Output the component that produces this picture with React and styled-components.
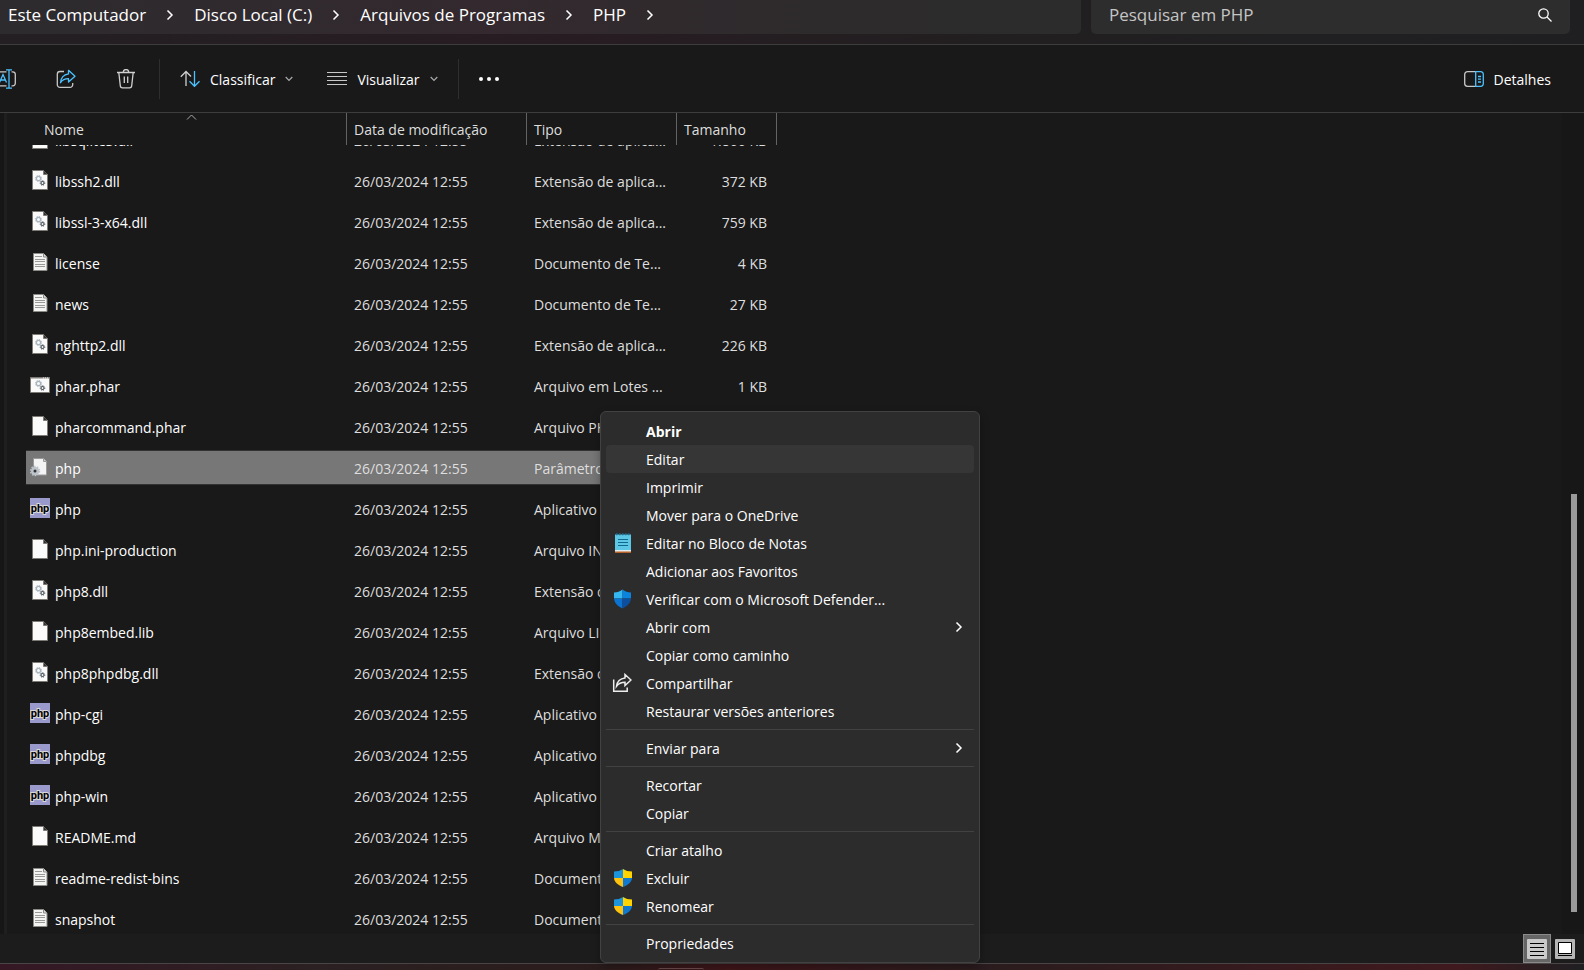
import { useLayoutEffect, useRef } from 'react';
import styled, { createGlobalStyle } from 'styled-components';

const GlobalStyle = createGlobalStyle`
    * {
        box-sizing: border-box;
    }
    body {
        margin: 0;
        background: #191919;
        color: #fff;
        font-family: 'Open Sans', 'Noto Sans', sans-serif;
        font-size: 14px;
        line-height: 20px;
        overflow: hidden;
    }
    button,
    input {
        font: inherit;
        color: inherit;
        background: none;
        border: none;
        padding: 0;
        margin: 0;
    }
    svg {
        display: block;
        flex: none;
    }
`;

const Window = styled.div`
    height: 100vh;
    display: flex;
    flex-direction: column;
`;

const TopBar = styled.header`
    display: flex;
    gap: 10px;
    padding: 0 14px 10px 0;
    background: linear-gradient(90deg, #231f23, #271c22 35%, #211f20 65%, #1f1f22);
    border-bottom: 1px solid #3d3d3d;
`;

const AddressBar = styled.nav`
    flex: 1;
    display: flex;
    align-items: center;
    height: 34px;
    padding: 0 0 4px 8px;
    border-radius: 0 0 5px 0;
    background: linear-gradient(90deg, #2d2b2e, #33292e 45%, #2d2b2c 80%, #2c2c2c);
    font-size: 17px;
    svg {
        margin: 0 20px;
    }
`;

const Crumb = styled.button`
    white-space: nowrap;
`;

const SearchBox = styled.label`
    display: flex;
    align-items: center;
    width: 479px;
    height: 34px;
    padding: 0 18px 4px 18px;
    border-radius: 0 0 5px 5px;
    background: #2d2d2d;
    font-size: 17px;
    input {
        flex: 1;
        min-width: 0;
        outline: none;
    }
    input::placeholder {
        color: #c5c5c5;
        opacity: 1;
    }
`;

const Toolbar = styled.div`
    display: flex;
    align-items: center;
    height: 68px;
    padding-right: 33px;
    border-bottom: 1px solid #3d3d3d;
`;

const IconButton = styled.button`
    display: flex;
    justify-content: center;
    width: 60px;
    &:first-child {
        margin-left: -24px;
    }
`;

const ToolButton = styled.button`
    display: flex;
    align-items: center;
    gap: 10px;
    margin-left: ${(p) => (p.$end ? 'auto' : '0')};
    padding-right: ${(p) => (p.$end ? '0' : '14px')};
    padding-left: 20px;
`;

const Label = styled.span`
    padding-top: 2px;
`;

const Divider = styled.div`
    width: 1px;
    height: 40px;
    margin-left: ${(p) => p.$gap};
    background: #2e2e2e;
`;

const Content = styled.main`
    flex: 1;
    min-height: 0;
    display: flex;
    position: relative;
`;

const NavEdge = styled.div`
    width: 7px;
    border-right: 3px solid #1f1f1f;
    background: #161616;
`;

const FileTable = styled.table`
    flex: 1;
    min-width: 0;
    min-height: 0;
    display: flex;
    flex-direction: column;
    padding-left: 19px;
    text-align: left;
`;

const HeadRow = styled.tr`
    display: grid;
    grid-template-columns: 321px 180px 150px 100px;
    height: 32px;
`;

const HeadCell = styled.th`
    position: relative;
    padding: 7px 0 0 ${(p) => (p.$first ? '18px' : '7px')};
    border-right: 1px solid #636363;
    color: #dedede;
    font-weight: 400;
`;

const SortMark = styled.svg`
    position: absolute;
    top: 1px;
    left: 160px;
`;

const FileRows = styled.tbody`
    flex: 1;
    min-height: 0;
    display: block;
    padding-top: 3px;
    overflow-y: auto;
    scrollbar-width: none;
`;

const Row = styled.tr`
    display: grid;
    grid-template-columns: 321px 180px 150px 100px;
    width: 751px;
    height: 35px;
    margin-bottom: 6px;
    border: solid ${(p) => (p.$selected ? '#333' : 'transparent')};
    border-width: 1px 0;
    background: ${(p) => (p.$selected ? '#777' : 'transparent')};
    td {
        display: flex;
        align-items: center;
        padding: 3px 0 0 7px;
        color: #dedede;
        white-space: nowrap;
    }
    td:first-child {
        gap: 5px;
        padding-left: 4px;
        color: #fff;
    }
    td:last-child {
        justify-content: flex-end;
        padding-right: 10px;
    }
    svg {
        margin-bottom: 4px;
    }
`;

const ScrollTrack = styled.div`
    width: 22px;
    padding: 381px 7px 22px 9px;
    background: #171717;
`;

const ScrollThumb = styled.div`
    height: 100%;
    background: #9a9a9a;
`;

const StatusBar = styled.footer`
    display: flex;
    justify-content: flex-end;
    gap: 4px;
    height: 29px;
    padding-right: 9px;
    background: #1c1c1c;
`;

const ViewButton = styled.button`
    display: flex;
    align-items: center;
    justify-content: center;
    width: ${(p) => (p.$active ? '28px' : '20px')};
    border: ${(p) => (p.$active ? '1px solid #8a8a8a' : 'none')};
    background: ${(p) => (p.$active ? '#666' : 'transparent')};
`;

const Taskbar = styled.div`
    height: 7px;
    padding: 4px 0 0 658px;
    border-top: 1px solid #4a4446;
    background: linear-gradient(90deg, #351824, #2b2022 20%, #2b1c1c 38%, #40161a 46%, #2a1c1e 62%, #3f191d 92%, #1f1f22);
`;

const TaskItem = styled.div`
    width: 46px;
    height: 2px;
    border-top: 1px solid #6b4b4d;
    border-radius: 4px 4px 0 0;
`;

const Menu = styled.div`
    position: absolute;
    top: 298px;
    left: 600px;
    width: 380px;
    padding: 5px;
    border: 1px solid #424242;
    border-radius: 6px;
    background: #2c2c2c;
    box-shadow: 0 4px 10px rgba(0, 0, 0, 0.3);
`;

const MenuItem = styled.button`
    display: grid;
    grid-template-columns: 24px 1fr 8px;
    align-items: center;
    gap: 10px;
    width: 100%;
    height: 28px;
    padding: 0 11px 0 6px;
    border-radius: 4px;
    background: ${(p) => (p.$hover ? '#363636' : 'transparent')};
    font-weight: ${(p) => (p.$bold ? '700' : '400')};
    text-align: left;
`;

const MenuLine = styled.hr`
    height: 1px;
    margin: 4px 0;
    border: none;
    background: #424242;
`;

const Chevron = () => (
    <svg width="8" height="12" viewBox="0 0 8 12" fill="none" stroke="#fff" strokeWidth="1.5">
        <path d="M1.5 1.5 6 6 1.5 10.5" />
    </svg>
);

const DownArrow = () => (
    <svg width="8" height="6" viewBox="0 0 8 6" fill="none" stroke="#aaa" strokeWidth="1.2">
        <path d="M.7 1 4 4.3 7.3 1" />
    </svg>
);

const SearchIcon = () => (
    <svg width="14" height="14" viewBox="0 0 14 14" fill="none" stroke="#fff" strokeWidth="1.3">
        <circle cx="5.5" cy="5.5" r="4.7" />
        <path d="m9 9 4.5 4.5" />
    </svg>
);

const RenameIcon = () => (
    <svg width="20" height="20" viewBox="0 0 20 20" fill="none" strokeWidth="1.3">
        <path d="M10.5 2.8H3a2.5 2.5 0 0 0-2.5 2.5v9A2.5 2.5 0 0 0 3 16.8h7.5M15.5 2.8h1.2a2.6 2.6 0 0 1 2.6 2.5v9a2.6 2.6 0 0 1-2.6 2.5h-1.2" stroke="#c8c8c8" />
        <path d="M13 .8v18.4M10 .8h6M10 19.2h6M3.5 13.5 7 5.5l3.500 8M4.7 11h4.6" stroke="#4cc2ff" />
    </svg>
);

const ShareIcon = () => (
    <svg width="20" height="20" viewBox="0 0 20 20" fill="none" strokeWidth="1.3" strokeLinejoin="round">
        <path d="M8 2.5H4A2.7 2.7 0 0 0 1.3 5.2v10.5A2.7 2.7 0 0 0 4 18.4h10a2.7 2.7 0 0 0 2.7-2.7V14" stroke="#c8c8c8" />
        <path d="M12.5 1.3 19 7.2l-6.5 5.9V9.7c-3.8 0-6.2 1.2-8 4 .4-4.5 3-8 8-8.8z" stroke="#4cc2ff" />
    </svg>
);

const TrashIcon = () => (
    <svg width="20" height="20" viewBox="0 0 20 20" fill="none" stroke="#d0d0d0" strokeWidth="1.3">
        <path d="M1 3.5h18M7.3 3.3a2.7 2.7 0 0 1 5.4 0M2.8 3.5l1.5 13.3A2.2 2.2 0 0 0 6.5 18.9h7a2.2 2.2 0 0 0 2.2-2.1l1.5-13.3M8.3 7.5v6.5M11.7 7.5v6.5" />
    </svg>
);

const SortIcon = () => (
    <svg width="20" height="20" viewBox="0 0 20 20" fill="none" strokeWidth="1.3">
        <path d="M6 17V2.5M.8 7.700 6 2.5l5 5" stroke="#d0d0d0" />
        <path d="M14.5 2v15M9.5 12.3l5 5 5-5" stroke="#4cc2ff" />
    </svg>
);

const LinesIcon = () => (
    <svg width="20" height="20" viewBox="0 0 20 20" stroke="#c8c8c8">
        <path d="M0 3.5h20M0 7.5h20M0 11.5h20M0 15.5h20" />
    </svg>
);

const DotsIcon = () => (
    <svg width="20" height="4" viewBox="0 0 20 4" fill="#fff">
        <circle cx="2" cy="2" r="2" />
        <circle cx="10" cy="2" r="2" />
        <circle cx="18" cy="2" r="2" />
    </svg>
);

const DetailsIcon = () => (
    <svg width="20" height="16" viewBox="0 0 20 16" fill="none" strokeWidth="1.3">
        <path d="M11.5.7h-8A2.8 2.8 0 0 0 .7 3.5v9a2.8 2.8 0 0 0 2.8 2.8h8" stroke="#c8c8c8" />
        <path d="M11.7.7v14.6h5a2.6 2.6 0 0 0 2.6-2.8v-9A2.6 2.6 0 0 0 16.7.7zM14 5.5h3M14 8.2h3M14 11h3" stroke="#4cc2ff" />
    </svg>
);

const Gears = () => (
    <g fill="none">
        <circle cx="8.5" cy="8.5" r="2.1" stroke="#a9b4bd" strokeWidth="1.2" />
        <circle cx="8.5" cy="8.5" r="3.1" stroke="#a9b4bd" strokeDasharray="1.2 1.23" />
        <circle cx="12.5" cy="13" r="1.500" stroke="#4c565d" strokeWidth="1.1" />
        <circle cx="12.5" cy="13" r="2.3" stroke="#4c565d" strokeDasharray=".9 .9" />
    </g>
);

const Sheet = () => (
    <g stroke="#7d7a76">
        <path d="M2.5.5h11l4 4v15h-15z" fill="#fafafa" />
        <path d="M13.5.5v4h4" fill="#333" />
    </g>
);

const FileIcon = ({ kind }) => (
    <svg width="20" height="20" viewBox="0 0 20 20">
        {(kind === 'dll' || kind === 'blank') && <Sheet />}
        {kind === 'dll' && <Gears />}
        {kind === 'text' && (
            <>
                <path d="M3.5 1.5h10L17 5v13.500H3.500z" fill="#f4f4f2" stroke="#8a8a86" />
                <path d="M13.5 1.5V5H17" fill="#ddd" stroke="#8a8a86" />
                <path d="M5 4.5h7M5 7.5h10M5 9.5h10M5 12.5h10M5 14.5h10" stroke="#999" />
            </>
        )}
        {kind === 'batch' && (
            <>
                <path d="M.5 2.500h19v15H.5z" fill="#fafafa" stroke="#7d7a76" />
                <path d="M1 3h18" stroke="#7d7a76" />
                <path d="M13 3h5" stroke="#eee" strokeDasharray="1 1" />
                <Gears />
            </>
        )}
        {kind === 'config' && (
            <>
                <path d="M3.5 1.5h10l3 3V18h-13z" fill="#f4f4f4" stroke="#9a9a9a" />
                <path d="M13.5 1.5v3h3" fill="#ccc" stroke="#9a9a9a" />
                <circle cx="5" cy="14" r="4" fill="#bcc3ca" />
                <circle cx="5" cy="14" r="4.5" fill="none" stroke="#bcc3ca" strokeDasharray="1.5 1.33" strokeWidth="1.5" />
                <circle cx="5" cy="14" r="1.5" fill="#333" />
            </>
        )}
        {kind === 'php' && (
            <>
                <path d="M0 0h20v20H0z" fill="#9999cc" />
                <text
                    x="10"
                    y="14"
                    textAnchor="middle"
                    fontFamily="Roboto, sans-serif"
                    fontSize="11"
                    fontWeight="700"
                    fill="#000"
                    stroke="#d8d8d8"
                    strokeWidth="2"
                    paintOrder="stroke"
                >
                    php
                </text>
            </>
        )}
    </svg>
);

const NotepadIcon = () => (
    <svg width="20" height="20" viewBox="0 0 20 20">
        <path d="M3 17h16v3H3z" fill="#b5602a" />
        <path d="M3 16h16v2.5H3z" fill="#e8eef0" />
        <path d="M3 1.5h16V17H3z" fill="#5cc8e6" />
        <path d="M4 1.3h14" stroke="#1c6f93" strokeWidth="2" strokeDasharray="1.5 1.5" />
        <path d="M6 6.5h10M6 9.5h10M6 12.5h10" stroke="#0f6a8e" />
    </svg>
);

const DefenderIcon = () => (
    <svg width="20" height="20" viewBox="0 0 20 20">
        <path d="M10.500.5v9H2v-6c3.500 0 6-1 8.500-3z" fill="#35b8f1" />
        <path d="M10.500.5v9H19v-6c-3.500 0-6-1-8.500-3z" fill="#0a84dc" />
        <path d="M10.500 9.500v10C5.500 17 2.300 14 2 9.500z" fill="#0b74d1" />
        <path d="M10.500 9.500v10c5-2.500 8.200-5.500 8.500-10z" fill="#0c4f9e" />
    </svg>
);

const AdminShield = () => (
    <svg width="20" height="20" viewBox="0 0 20 20">
        <path d="M11 1v9H2V3.500C5.500 3.500 8.500 2.700 11 1z" fill="#1c95dd" />
        <path d="M11 1v9h9V3.500C16.500 3.500 13.500 2.700 11 1z" fill="#ffd400" />
        <path d="M11 10v9C5.500 16.800 2.300 14 2 10z" fill="#ffc20e" />
        <path d="M11 10v9c5.500-2.200 8.700-5 9-9z" fill="#0f79cf" />
    </svg>
);

const MenuShareIcon = () => (
    <svg width="20" height="20" viewBox="0 0 20 20" fill="none" stroke="#eee" strokeWidth="1.5">
        <path d="M1.700 6.500v11.800h13.500v-3.800" />
        <path d="M13 1.500 19 7l-6 5.500V9.300c-4 0-6.300 1-8.500 4C5 9 8 5.300 13 4.900z" />
    </svg>
);

const menuIcons = {
    notepad: NotepadIcon,
    defender: DefenderIcon,
    share: MenuShareIcon,
    admin: AdminShield
};

const dll = 'Extensão de aplica...';
const txt = 'Documento de Te...';
const files = [
    { name: 'libsqlite3.dll', kind: 'dll', type: dll, size: '1.866 KB' },
    { name: 'libssh2.dll', kind: 'dll', type: dll, size: '372 KB' },
    { name: 'libssl-3-x64.dll', kind: 'dll', type: dll, size: '759 KB' },
    { name: 'license', kind: 'text', type: txt, size: '4 KB' },
    { name: 'news', kind: 'text', type: txt, size: '27 KB' },
    { name: 'nghttp2.dll', kind: 'dll', type: dll, size: '226 KB' },
    { name: 'phar.phar', kind: 'batch', type: 'Arquivo em Lotes ...', size: '1 KB' },
    { name: 'pharcommand.phar', kind: 'blank', type: 'Arquivo PHAR' },
    { name: 'php', kind: 'config', type: 'Parâmetros de co...', selected: true },
    { name: 'php', kind: 'php', type: 'Aplicativo' },
    { name: 'php.ini-production', kind: 'blank', type: 'Arquivo INI-PRO...' },
    { name: 'php8.dll', kind: 'dll', type: dll },
    { name: 'php8embed.lib', kind: 'blank', type: 'Arquivo LIB' },
    { name: 'php8phpdbg.dll', kind: 'dll', type: dll },
    { name: 'php-cgi', kind: 'php', type: 'Aplicativo' },
    { name: 'phpdbg', kind: 'php', type: 'Aplicativo' },
    { name: 'php-win', kind: 'php', type: 'Aplicativo' },
    { name: 'README.md', kind: 'blank', type: 'Arquivo MD' },
    { name: 'readme-redist-bins', kind: 'text', type: txt },
    { name: 'snapshot', kind: 'text', type: txt }
];

const menuItems = [
    { label: 'Abrir', bold: true },
    { label: 'Editar', hover: true },
    { label: 'Imprimir' },
    { label: 'Mover para o OneDrive' },
    { label: 'Editar no Bloco de Notas', icon: 'notepad' },
    { label: 'Adicionar aos Favoritos' },
    { label: 'Verificar com o Microsoft Defender...', icon: 'defender' },
    { label: 'Abrir com', sub: true },
    { label: 'Copiar como caminho' },
    { label: 'Compartilhar', icon: 'share' },
    { label: 'Restaurar versões anteriores' },
    null,
    { label: 'Enviar para', sub: true },
    null,
    { label: 'Recortar' },
    { label: 'Copiar' },
    null,
    { label: 'Criar atalho' },
    { label: 'Excluir', icon: 'admin' },
    { label: 'Renomear', icon: 'admin' },
    null,
    { label: 'Propriedades' }
];

const crumbs = ['Este Computador', 'Disco Local (C:)', 'Arquivos de Programas', 'PHP'];

function ContextMenu() {
    return (
        <Menu role="menu">
            {menuItems.map((item, i) => {
                if (!item) return <MenuLine key={i} />;
                const Icon = menuIcons[item.icon];
                return (
                    <MenuItem key={i} role="menuitem" $bold={item.bold} $hover={item.hover}>
                        <span>{Icon && <Icon />}</span>
                        <Label>{item.label}</Label>
                        {item.sub && <Chevron />}
                    </MenuItem>
                );
            })}
        </Menu>
    );
}

function FileBrowser() {
    const rowsRef = useRef(null);

    useLayoutEffect(() => {
        rowsRef.current.scrollTop = 26;
    }, []);

    return (
        <FileTable>
            <thead>
                <HeadRow>
                    <HeadCell $first>
                        Nome
                        <SortMark width="11" height="7" viewBox="0 0 11 7" fill="none" stroke="#aaa">
                            <path d="M1 5.5 5.5 1 10 5.5" />
                        </SortMark>
                    </HeadCell>
                    <HeadCell>Data de modificação</HeadCell>
                    <HeadCell>Tipo</HeadCell>
                    <HeadCell>Tamanho</HeadCell>
                </HeadRow>
            </thead>
            <FileRows ref={rowsRef}>
                {files.map((file, i) => (
                    <Row key={i} $selected={file.selected}>
                        <td>
                            <FileIcon kind={file.kind} />
                            {file.name}
                        </td>
                        <td>26/03/2024 12:55</td>
                        <td>{file.type}</td>
                        <td>{file.size}</td>
                    </Row>
                ))}
            </FileRows>
        </FileTable>
    );
}

function App() {
    return (
        <Window>
            <GlobalStyle />
            <TopBar>
                <AddressBar>
                    {crumbs.map((crumb) => [
                        <Crumb key={crumb}>{crumb}</Crumb>,
                        <Chevron key={`${crumb}-arrow`} />
                    ])}
                </AddressBar>
                <SearchBox>
                    <input type="search" placeholder="Pesquisar em PHP" aria-label="Pesquisar em PHP" />
                    <SearchIcon />
                </SearchBox>
            </TopBar>
            <Toolbar>
                <IconButton aria-label="Renomear">
                    <RenameIcon />
                </IconButton>
                <IconButton aria-label="Compartilhar">
                    <ShareIcon />
                </IconButton>
                <IconButton aria-label="Excluir">
                    <TrashIcon />
                </IconButton>
                <Divider $gap="3px" />
                <ToolButton>
                    <SortIcon />
                    <Label>Classificar</Label>
                    <DownArrow />
                </ToolButton>
                <ToolButton>
                    <LinesIcon />
                    <Label>Visualizar</Label>
                    <DownArrow />
                </ToolButton>
                <Divider $gap="6px" />
                <IconButton aria-label="Ver mais">
                    <DotsIcon />
                </IconButton>
                <ToolButton $end>
                    <DetailsIcon />
                    <Label>Detalhes</Label>
                </ToolButton>
            </Toolbar>
            <Content>
                <NavEdge />
                <FileBrowser />
                <ScrollTrack>
                    <ScrollThumb />
                </ScrollTrack>
                <ContextMenu />
            </Content>
            <StatusBar>
                <ViewButton $active aria-label="Detalhes">
                    <svg width="20" height="20" viewBox="0 0 20 20">
                        <rect width="20" height="20" rx="1" fill="#c9c9c9" />
                        <path d="M3 4.5h14M3 8.5h14M3 12.5h14M3 16.5h14" stroke="#000" />
                    </svg>
                </ViewButton>
                <ViewButton aria-label="Ícones grandes">
                    <svg width="20" height="20" viewBox="0 0 20 20">
                        <rect width="20" height="20" rx="1" fill="#b5b5b5" />
                        <path d="M3.5 3.5h13v11h-13z" fill="#fff" stroke="#000" />
                        <path d="M3 16.5h14" stroke="#000" />
                    </svg>
                </ViewButton>
            </StatusBar>
            <Taskbar>
                <TaskItem />
            </Taskbar>
        </Window>
    );
}

export default App;
